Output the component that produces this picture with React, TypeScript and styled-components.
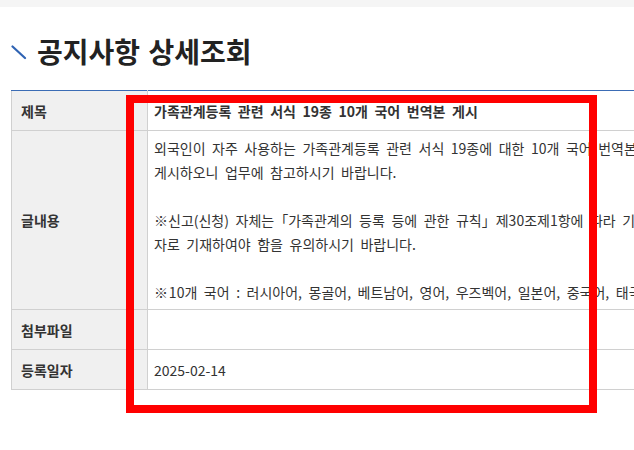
import React from "react";
import styled, { createGlobalStyle } from "styled-components";

const GlobalStyle = createGlobalStyle`
  html, body {
    margin: 0;
    padding: 0;
    background: #ffffff;
    overflow: hidden;
  }
  body {
    font-family: "Noto Sans CJK KR", "Noto Sans", sans-serif;
    color: #333333;
  }
`;

const Page = styled.div`
  position: relative;
  width: 634px;
  height: 450px;
  overflow: hidden;
`;

const TopStrip = styled.div`
  height: 7px;
  background: #f5f5f5;
`;

const Content = styled.main`
  padding: 26px 0 0 11px;
`;

const Heading = styled.h2`
  display: flex;
  align-items: center;
  gap: 10px;
  margin: 0 0 21px 0;
  height: 36px;
  font-size: 28px;
  font-weight: 700;
  line-height: 36px;
  color: #222222;
  word-spacing: 2px;
`;

const Mark = styled.svg`
  width: 16px;
  height: 16px;
  flex: none;
  margin-top: 2px;
`;

const Table = styled.table`
  width: 820px;
  border-collapse: collapse;
  table-layout: fixed;
  font-size: 14px;
  tr:first-child > * {
    border-top: 1px solid #3b6cb5;
  }
`;

const Th = styled.th`
  width: 136px;
  box-sizing: border-box;
  background: #f0f0f0;
  border: 1px solid #d0d0d0;
  padding: 0 9px;
  text-align: left;
  font-weight: 700;
  color: #333333;
  height: 40px;
  vertical-align: middle;
`;

const Td = styled.td<{ $bold?: boolean }>`
  border: 1px solid #d0d0d0;
  padding: 5px 6px;
  height: 40px;
  box-sizing: border-box;
  font-weight: ${(p) => (p.$bold ? 700 : 400)};
  color: #333333;
  line-height: 24px;
  white-space: nowrap;
  word-spacing: 3.4px;
  vertical-align: middle;
`;

const Highlight = styled.div`
  position: absolute;
  left: 126px;
  top: 95px;
  width: 471px;
  height: 318px;
  box-sizing: border-box;
  border: 8px solid #ff0000;
  pointer-events: none;
`;

export default function App() {
  return (
    <>
      <GlobalStyle />
      <Page>
        <TopStrip />
        <Content>
          <Heading>
            <Mark viewBox="0 0 16 16">
              <line x1="1.5" y1="2.5" x2="14" y2="14" stroke="#2f63b3" strokeWidth="2.2" strokeLinecap="round" />
            </Mark>
            공지사항 상세조회
          </Heading>
          <Table>
            <tbody>
              <tr>
                <Th scope="row">제목</Th>
                <Td $bold>가족관계등록 관련 서식 19종 10개 국어 번역본 게시</Td>
              </tr>
              <tr>
                <Th scope="row">글내용</Th>
                <Td>
                  외국인이 자주 사용하는 가족관계등록 관련 서식 19종에 대한 10개 국어 번역본을
                  <br />
                  게시하오니 업무에 참고하시기 바랍니다.
                  <br />
                  <br />
                  ※신고(신청) 자체는「가족관계의 등록 등에 관한 규칙」제30조제1항에 따라 기재사항을 한글 문
                  <br />
                  자로 기재하여야 함을 유의하시기 바랍니다.
                  <br />
                  <br />
                  ※&#8202;10개 국어 : 러시아어, 몽골어, 베트남어, 영어, 우즈벡어, 일본어, 중국어, 태국어, 캄보디아어, 필리핀어
                </Td>
              </tr>
              <tr>
                <Th scope="row">첨부파일</Th>
                <Td></Td>
              </tr>
              <tr>
                <Th scope="row">등록일자</Th>
                <Td>2025-02-14</Td>
              </tr>
            </tbody>
          </Table>
        </Content>
        <Highlight />
      </Page>
    </>
  );
}
